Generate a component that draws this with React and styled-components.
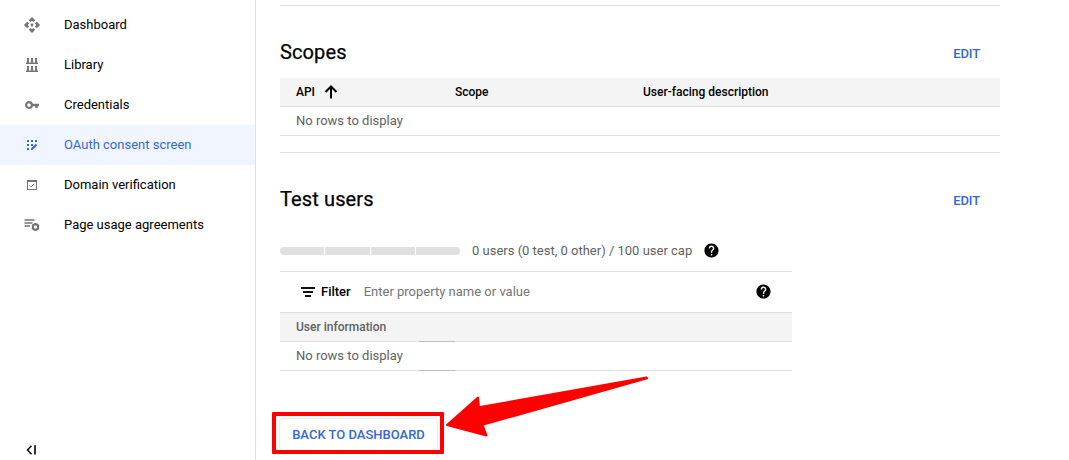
import React from "react";
import styled, { createGlobalStyle, css } from "styled-components";
import { MdHelp } from "react-icons/md";

const GlobalStyle = createGlobalStyle`
  * { box-sizing: border-box; }
  body {
    margin: 0;
    background: #fff;
    color: #000;
    font-family: Roboto, "Liberation Sans", sans-serif;
    font-size: 13px;
    overflow: hidden;
  }
`;

const Page = styled.div`
  position: relative;
  display: flex;
  width: 1069px;
  height: 460px;
  overflow: hidden;
`;

const Sidebar = styled.nav`
  display: flex;
  flex-direction: column;
  width: 256px;
  padding-top: 5px;
  border-right: 1px solid #e0e0e0;
`;

const NavItem = styled.a`
  display: flex;
  align-items: center;
  height: 40px;
  padding-left: 22px;
  gap: 22px;
  line-height: 20px;
  color: ${(p) => (p.$active ? "#3367d6" : "#000")};
  background: ${(p) => (p.$active ? "#f0f5ff" : "transparent")};
`;

const NavIcon = styled.span`
  display: flex;
  align-items: center;
  justify-content: center;
  width: 20px;
  height: 20px;
  color: ${(p) => (p.$active ? "#3367d6" : "#757575")};
  svg { display: block; }
`;

const Collapse = styled.div`
  margin-top: auto;
  padding: 0 0 5px 26px;
  svg { display: block; }
`;

const Main = styled.main`
  width: 720px;
  margin-left: 24px;
  padding-top: 5px;
`;

const Rule = styled.hr`
  height: 1px;
  margin: 0;
  border: 0;
  background: #e0e0e0;
`;

const SectionHead = styled.header`
  display: flex;
  align-items: center;
  justify-content: space-between;
  height: 28px;
  padding-right: 20px;
  margin-top: ${(p) => p.$top}px;
`;

const Title = styled.h2`
  margin: 0;
  font-size: 20px;
  font-weight: 400;
  line-height: 28px;
  letter-spacing: 0.12px;
  -webkit-text-stroke: 0.25px #000;
`;

const EditButton = styled.button`
  padding: 3px 0 0;
  border: 0;
  background: none;
  color: #3367d6;
  font: 500 13px/20px Roboto, sans-serif;
  letter-spacing: -0.1px;
`;

const Table = styled.section`
  width: ${(p) => p.$width}px;
  margin-top: ${(p) => p.$top || 0}px;
`;

const row = css`
  display: flex;
  align-items: center;
  height: 29px;
  padding-left: 16px;
  border-bottom: 1px solid #e0e0e0;
`;

const HeadRow = styled.div`
  ${row}
  position: relative;
  background: #f4f4f4;
  font-size: 12px;
  font-weight: 500;
  color: ${(p) => (p.$muted ? "#616161" : "#000")};
`;

const Cell = styled.div`
  display: flex;
  align-items: center;
  gap: 9px;
  width: ${(p) => p.$width};
`;

const BodyRow = styled.div`
  ${row}
  position: relative;
  padding-bottom: 2px;
  color: #616161;
`;

const Mark = styled.span`
  position: absolute;
  left: 139px;
  bottom: -1px;
  width: 36px;
  height: 1px;
  background: #bdbdbd;
`;

const Usage = styled.div`
  display: flex;
  align-items: center;
  height: 20px;
  margin-top: 27px;
  color: #616161;
`;

const Meter = styled.div`
  display: grid;
  grid-template-columns: 44px 45px 44px 44px;
  gap: 1px;
  width: 180px;
  height: 8px;
  margin: 2px 12px 0 0;
  border-radius: 4px;
  overflow: hidden;
`;

const Segment = styled.span`
  background: #e0e0e0;
`;

const HelpIcon = styled(MdHelp)`
  display: block;
  width: 17px;
  height: 17px;
  color: #000;
  margin-left: ${(p) => p.$left || "0"};
`;

const FilterBar = styled.div`
  display: flex;
  align-items: center;
  height: 42px;
  padding: 0 20px 2px 21px;
  border: solid #e0e0e0;
  border-width: 1px 0;
`;

const FilterGlyph = styled.svg`
  display: block;
  margin-top: 2px;
`;

const FilterLabel = styled.span`
  margin: 0 13px 0 6px;
  font-weight: 500;
`;

const Placeholder = styled.span`
  color: #757575;
`;

const BackButton = styled.button`
  display: block;
  height: 31px;
  width: 157px;
  margin-top: 48px;
  padding: 0;
  border: 0;
  border-radius: 3px;
  background: #fff;
  box-shadow: 0 0 3px rgba(0, 0, 0, 0.22);
  color: #3367d6;
  font: 500 13px/31px Roboto, sans-serif;
`;

const Highlight = styled.div`
  position: absolute;
  left: 272px;
  top: 412px;
  width: 172px;
  height: 42px;
  border: 4px solid #f00;
  border-radius: 1px;
`;

const Pointer = styled.svg`
  position: absolute;
  left: 440px;
  top: 370px;
`;

const DashboardIcon = () => (
  <svg width="16" height="16" viewBox="0 0 16 16" fill="currentColor">
    <path d="M8 0l3.200 3.200-1.700 1.900L8 3.800 6.500 5.100 4.800 3.200zM8 16l3.200-3.200-1.700-1.900L8 12.200l-1.500-1.300-1.700 1.900zM0 8l3.200-3.200 1.900 1.700L3.800 8l1.300 1.500-1.900 1.700zM16 8l-3.200-3.200-1.900 1.700L12.200 8l-1.300 1.500 1.900 1.700z" />
    <circle cx="8" cy="8" r="1.400" />
  </svg>
);

const LibraryIcon = () => (
  <svg width="12" height="14" fill="currentColor">
    <path d="M0 4.5h12v1.5H0zM1 0h2v5H1zM5 0h2v5H5zM9 0h2v5H9zM0 12.5h12V14H0zM1 8h2v5H1zM5 8h2v5H5zM9 8h2v5H9z" />
  </svg>
);

const KeyIcon = () => (
  <svg width="14" height="8" viewBox="0 0 14 8" fill="none" stroke="currentColor">
    <circle cx="4" cy="4" r="2.900" strokeWidth="2.100" />
    <path d="M7 4h7M11.500 4v3" strokeWidth="2.400" />
  </svg>
);

const ConsentIcon = () => (
  <svg width="12" height="12" viewBox="0 0 12 12" fill="currentColor">
    <path d="M1 1h2v2H1zM5 1h2v2H5zM9 1h2v2H9zM1 5h2v2H1zM5 5h2v2H5zM1 9h2v2H1z" />
    <path d="M5 9.6l4.8-4.8 1.4 1.4L6.400 11H5z" />
  </svg>
);

const DomainIcon = () => (
  <svg width="10" height="10" viewBox="0 0 10 10" fill="none" stroke="currentColor">
    <path d="M.5.5h9v9h-9z" strokeWidth="1.1" />
    <path d="M0 1h10" strokeWidth="2" />
    <path d="M2.7 5.4l1.5 1.5 3.1-3.2" />
  </svg>
);

const AgreementsIcon = () => (
  <svg width="16" height="14" viewBox="0 0 16 14" fill="none" stroke="currentColor">
    <path d="M.5 2h10M.5 5h8M.5 8h5.500" strokeWidth="1.5" />
    <circle cx="11.500" cy="9" r="2.700" strokeWidth="1.9" />
    <path d="M11.500 5v1.500M11.500 11.500V13M8 7l1.300.8M13.700 10.200L15 11M8 11l1.300-.8M13.700 7.800L15 7" strokeWidth="2" />
  </svg>
);

const CollapseIcon = () => (
  <svg width="11" height="10" viewBox="0 0 11 10" fill="none" stroke="#111">
    <path d="M5.5.8L1.5 5l4 4.2" strokeWidth="1.6" />
    <path d="M9 .2v9.3" stroke="#333" strokeWidth="2" />
  </svg>
);

const SortIcon = () => (
  <svg width="14" height="14" viewBox="0 0 14 14" fill="none" stroke="#000" strokeWidth="2">
    <path d="M7 13.500V1.500M1.500 7L7 1.500 12.500 7" />
  </svg>
);

const FilterIcon = () => (
  <FilterGlyph width="14" height="10" viewBox="0 0 14 10" fill="#111">
    <path d="M0 0h14v2H0zM2 4h10v2H2zM4 8h6v2H4z" />
  </FilterGlyph>
);

const navigation = [
  { label: "Dashboard", icon: <DashboardIcon /> },
  { label: "Library", icon: <LibraryIcon /> },
  { label: "Credentials", icon: <KeyIcon /> },
  { label: "OAuth consent screen", icon: <ConsentIcon />, active: true },
  { label: "Domain verification", icon: <DomainIcon /> },
  { label: "Page usage agreements", icon: <AgreementsIcon /> },
];

export default function App() {
  return (
    <Page>
      <GlobalStyle />
      <Sidebar>
        {navigation.map((item) => (
          <NavItem key={item.label} $active={item.active}>
            <NavIcon $active={item.active}>{item.icon}</NavIcon>
            {item.label}
          </NavItem>
        ))}
        <Collapse>
          <CollapseIcon />
        </Collapse>
      </Sidebar>
      <Main>
        <Rule />
        <SectionHead $top={32}>
          <Title>Scopes</Title>
          <EditButton>EDIT</EditButton>
        </SectionHead>
        <Table $width={720} $top={12}>
          <HeadRow>
            <Cell $width="159px">
              API <SortIcon />
            </Cell>
            <Cell $width="188px">Scope</Cell>
            <Cell>User-facing description</Cell>
          </HeadRow>
          <BodyRow>No rows to display</BodyRow>
        </Table>
        <Table $width={720} $top={16}>
          <Rule />
        </Table>
        <SectionHead $top={32}>
          <Title>Test users</Title>
          <EditButton>EDIT</EditButton>
        </SectionHead>
        <Usage>
          <Meter>
            <Segment />
            <Segment />
            <Segment />
            <Segment />
          </Meter>
          0 users (0 test, 0 other) / 100 user cap
          <HelpIcon $left="11px" />
        </Usage>
        <Table $width={512} $top={11}>
          <FilterBar>
            <FilterIcon />
            <FilterLabel>Filter</FilterLabel>
            <Placeholder>Enter property name or value</Placeholder>
            <HelpIcon $left="auto" />
          </FilterBar>
          <HeadRow $muted>
            User information
            <Mark />
          </HeadRow>
          <BodyRow>
            No rows to display
            <Mark />
          </BodyRow>
        </Table>
        <BackButton>BACK TO DASHBOARD</BackButton>
      </Main>
      <Highlight />
      <Pointer width="220" height="76" viewBox="440 370 220 76">
        <path
          d="M447 425L478 397.500L479 407.300L646.500 377.500L647 378.300L482.500 424.800L486.500 435.500Z"
          fill="#f00"
          stroke="#f00"
          strokeWidth="2"
          strokeLinejoin="round"
        />
      </Pointer>
    </Page>
  );
}
